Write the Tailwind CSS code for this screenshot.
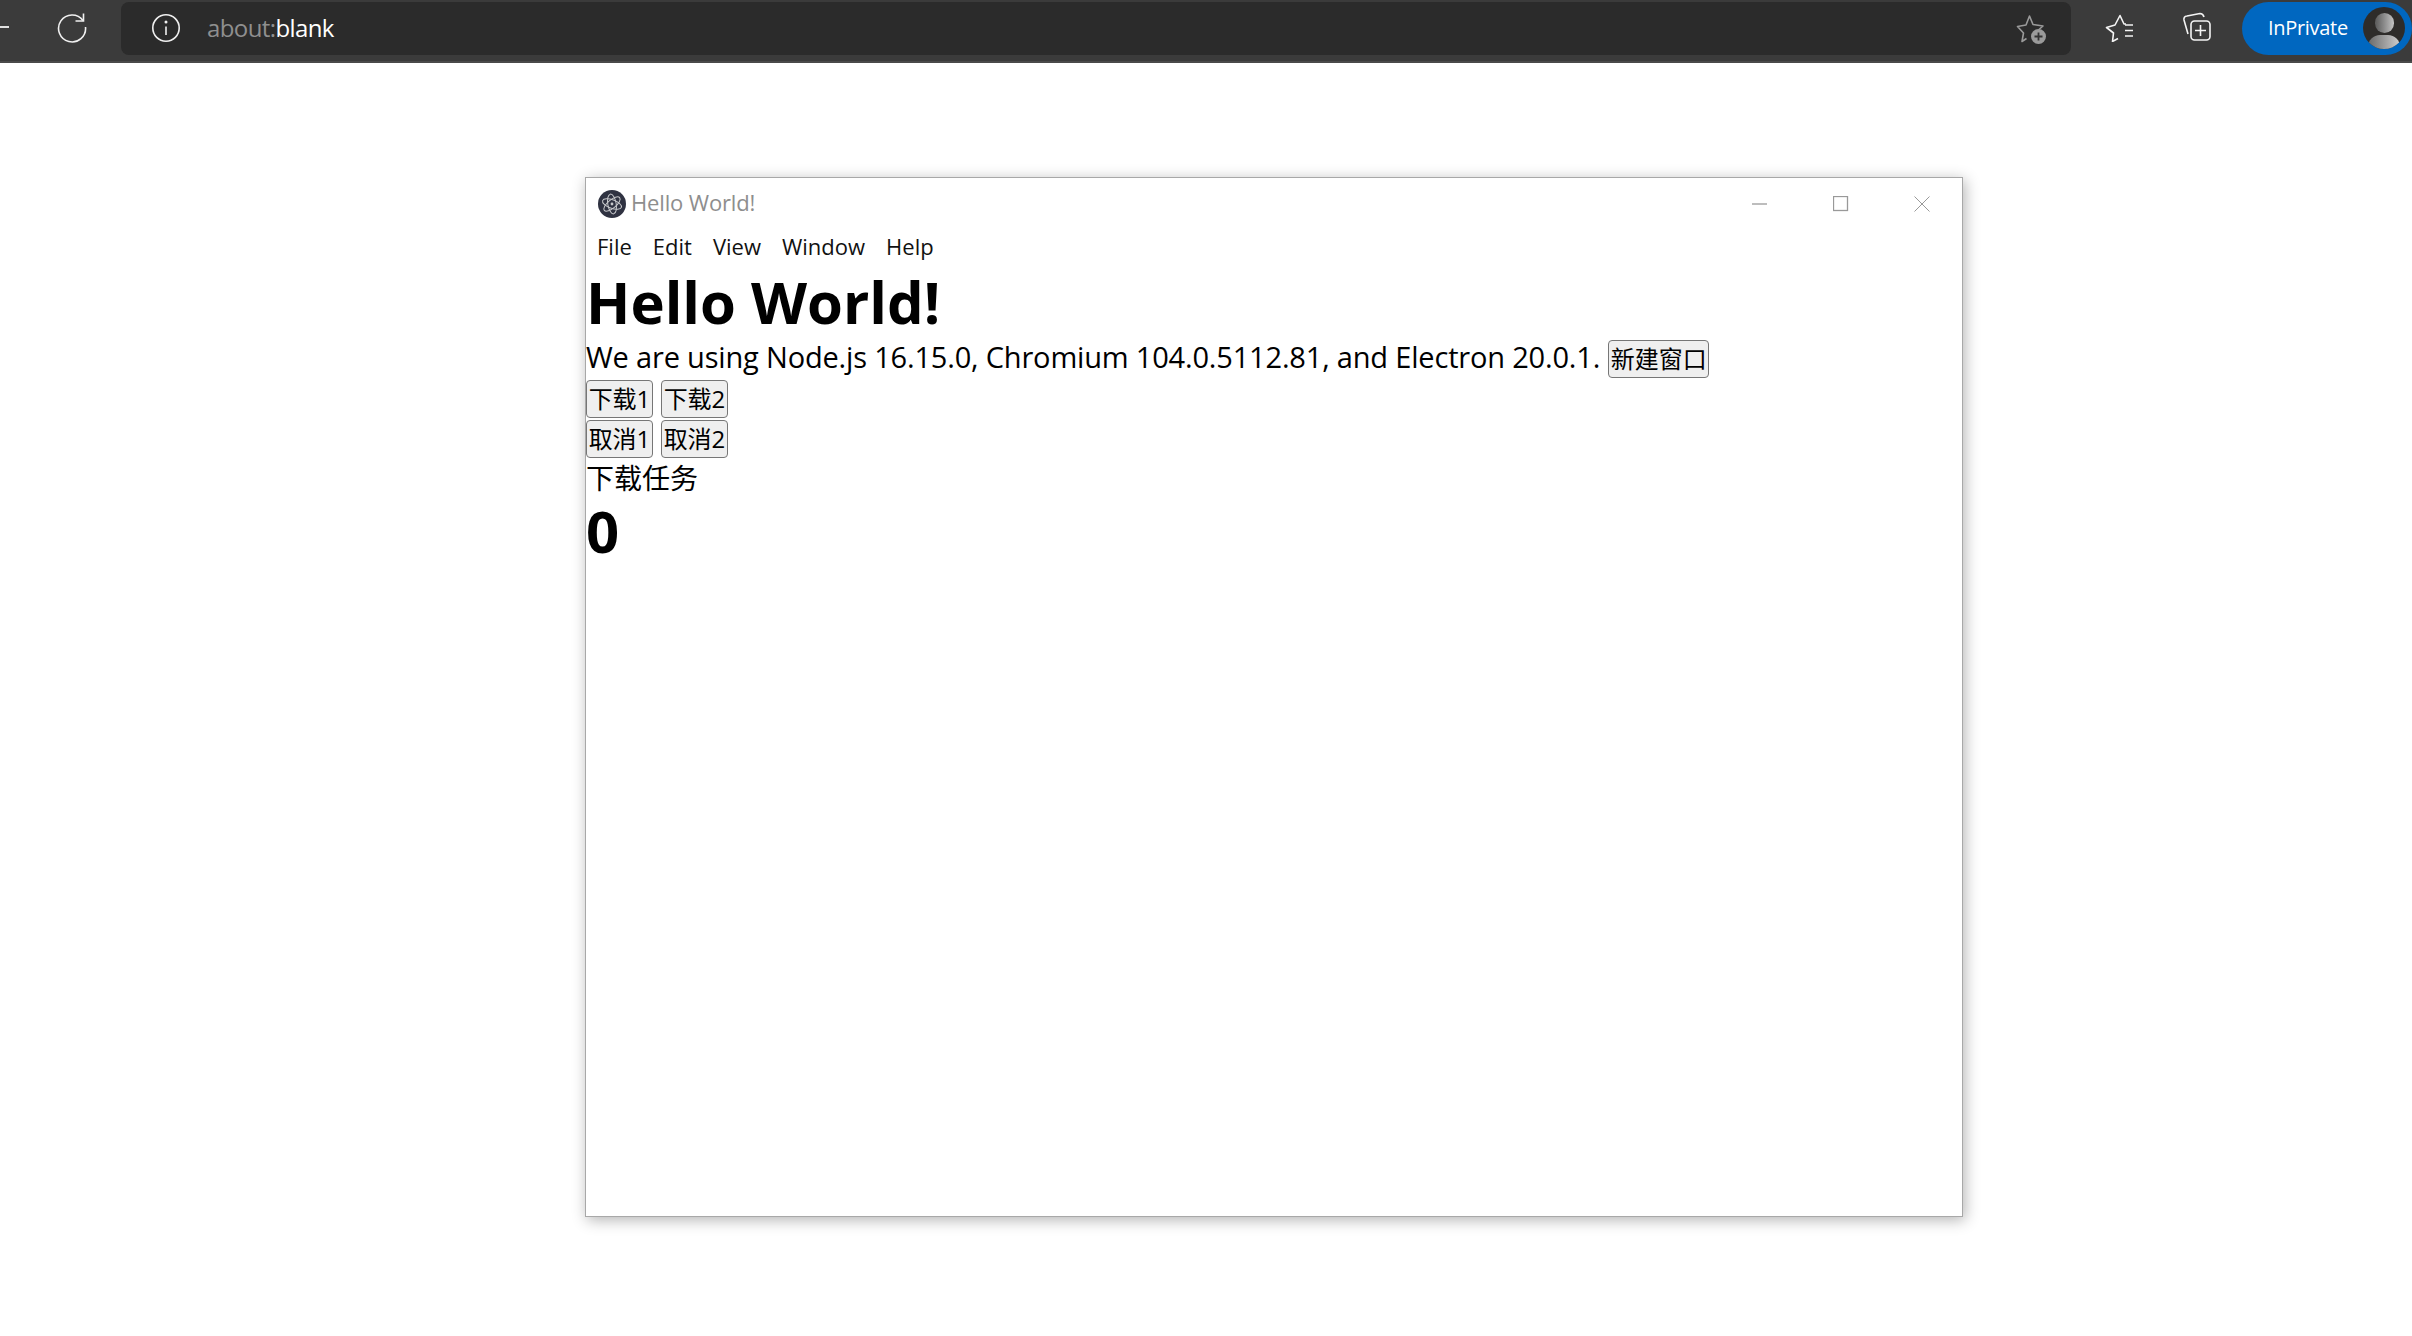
<!DOCTYPE html>
<html lang="en">
<head>
    <meta charset="UTF-8">
    <title>Hello World!</title>
    <script src="https://cdn.jsdelivr.net/npm/@tailwindcss/browser@4"></script>
</head>
<body class="bg-white h-[1336px] w-[2412px] overflow-hidden font-['Open_Sans','Noto_Sans_CJK_SC',sans-serif]">
    <!-- Browser toolbar -->
    <div class="h-[63px] bg-[#3b3b3b] border-b-2 border-[#4a4a4a] flex items-start relative">
        <div class="w-[121px] h-[53px] relative flex items-center shrink-0">
            <div class="w-[9px] h-[2px] bg-[#e0e0e0]"></div>
            <svg class="ml-[47px]" width="32" height="32" viewBox="0 0 32 32" fill="none" stroke="#f0f0f0" stroke-width="1.6">
                <path d="M27 9.5A13.5 13.5 0 1 0 29.5 16"/>
                <path d="M27.5 2.5V10H19.5"/>
            </svg>
        </div>
        <div class="w-[1950px] h-[53px] mt-[2px] bg-[#2b2b2b] rounded-lg flex items-center shrink-0">
            <svg class="ml-[30px] -mt-[1px]" width="30" height="30" viewBox="0 0 30 30" fill="none" stroke="#f0f0f0" stroke-width="1.6">
                <circle cx="15" cy="15" r="13.2"/>
                <path d="M15 13.5V22"/>
                <circle cx="15" cy="9" r="0.7" fill="#f0f0f0"/>
            </svg>
            <div class="ml-[26px] -mt-[2px] text-[24px] text-[#8f8f8f] tracking-[-0.6px]">about:<span class="text-white">blank</span></div>
            <svg class="ml-auto mr-[23px]" width="32" height="32" viewBox="0 0 32 32" fill="none" stroke="#9a9a9a" stroke-width="1.6" stroke-linejoin="round">
                <path d="M10.5 25.5L6 28.5L7.5 20L1.5 13.5L10 12L13.5 3L17 11.5L27 13L23 16.5"/>
                <circle cx="22.5" cy="23.5" r="7.5" fill="#9a9a9a" stroke="none"/>
                <path d="M22.5 19.5V27.5M18.5 23.5H26.5" stroke="#333" stroke-width="1.8"/>
            </svg>
        </div>
        <div class="w-[64px] h-[53px] flex items-center justify-center ml-[17px] shrink-0">
            <svg width="30" height="30" viewBox="0 0 30 30" fill="none" stroke="#f4f4f4" stroke-width="1.6" stroke-linejoin="round">
                <path d="M13 26.5L7.5 29.5L8.5 21L1.5 15.5L10 13L15 3.5L19 12H21"/>
                <path d="M20 13H28M20 18.5H28M20 24H28"/>
            </svg>
        </div>
        <div class="w-[60px] h-[53px] flex items-center justify-center ml-[15px] shrink-0">
            <svg width="30" height="30" viewBox="0 0 30 30" fill="none" stroke="#f4f4f4" stroke-width="1.6" stroke-linejoin="round">
                <path d="M6 22L2 8Q1.4 4.5 5 4L18 1.5Q21 1.5 22 5"/>
                <rect x="9" y="9" width="19" height="19" rx="3.5"/>
                <path d="M18.5 13V24M13 18.5H24"/>
            </svg>
        </div>
        <div class="w-[170px] h-[53px] mt-[2px] ml-[15px] bg-[#0067c0] rounded-full flex items-center shrink-0 relative">
            <span class="ml-[26px] -mt-[2px] text-[20px] text-white tracking-[-0.3px]">InPrivate</span>
            <div class="absolute left-[121px] top-[5px] w-[42px] h-[42px] rounded-full bg-[#2e2c2a] overflow-hidden">
                <div class="absolute left-[12px] top-[6px] w-[19px] h-[20px] rounded-full bg-gradient-to-r from-[#5a5a5a] to-[#c4c4c4]"></div>
                <div class="absolute left-[5px] top-[28px] w-[32px] h-[24px] rounded-full bg-gradient-to-r from-[#6a6a6a] to-[#cfcfcf]"></div>
            </div>
        </div>
    </div>

    <!-- Electron window -->
    <div class="ml-[585px] mt-[114px] w-[1378px] h-[1040px] bg-white border border-[#a8a8a8] shadow-[2px_3px_14px_rgba(0,0,0,0.3)] flex flex-col">
        <div class="h-[52px] flex items-center shrink-0">
            <svg class="ml-[12px]" width="28" height="28" viewBox="0 0 28 28" fill="none" stroke="#c8c9cc" stroke-width="1">
                <circle cx="14" cy="14" r="14" fill="#2f3241" stroke="none"/>
                <ellipse cx="14" cy="14" rx="10" ry="4.2" transform="rotate(20 14 14)"/>
                <ellipse cx="14" cy="14" rx="10" ry="4.2" transform="rotate(80 14 14)"/>
                <ellipse cx="14" cy="14" rx="10" ry="4.2" transform="rotate(140 14 14)"/>
                <circle cx="14" cy="14" r="1.4" fill="#c8c9cc" stroke="none"/>
            </svg>
            <span class="ml-[5px] -mt-[3px] text-[22px] text-[#8e8e8e] tracking-[-0.15px]">Hello World!</span>
            <div class="ml-auto flex items-center">
                <svg width="81" height="16" viewBox="0 0 81 16" stroke="#999" stroke-width="1.3" fill="none"><path d="M0 8H15"/></svg>
                <svg width="81" height="16" viewBox="0 0 81 16" stroke="#999" stroke-width="1.3" fill="none"><rect x="0.5" y="0.5" width="14" height="14"/></svg>
                <svg class="mr-[32px]" width="16" height="16" viewBox="0 0 16 16" stroke="#999" stroke-width="1" fill="none"><path d="M0.5 0.5L15.5 15.5M15.5 0.5L0.5 15.5"/></svg>
            </div>
        </div>
        <div class="h-[33px] flex items-center text-[22px] text-[#111] pl-[11px] gap-[21px] shrink-0">
            <span>File</span><span>Edit</span><span>View</span><span>Window</span><span>Help</span>
        </div>
        <div class="h-[74px] pt-[5px] text-[58px] leading-[68px] font-bold text-black shrink-0">Hello World!</div>
        <div class="h-[40px] flex items-center text-[29px] text-black tracking-[-0.18px] shrink-0">
            <span>We are using Node.js 16.15.0, Chromium 104.0.5112.81, and Electron 20.0.1.</span>
            <button class="ml-[8px] mt-[4px] w-[101px] h-[38px] bg-[#efefef] border border-[#767676] rounded-[4px] text-[24px] leading-none tracking-normal text-black">新建窗口</button>
        </div>
        <div class="flex gap-[8px] mt-[3px] shrink-0">
            <button class="w-[67px] h-[38px] bg-[#efefef] border border-[#767676] rounded-[4px] text-[24px] leading-none text-black">下载1</button>
            <button class="w-[67px] h-[38px] bg-[#efefef] border border-[#767676] rounded-[4px] text-[24px] leading-none text-black">下载2</button>
        </div>
        <div class="flex gap-[8px] mt-[2px] shrink-0">
            <button class="w-[67px] h-[38px] bg-[#efefef] border border-[#767676] rounded-[4px] text-[24px] leading-none text-black">取消1</button>
            <button class="w-[67px] h-[38px] bg-[#efefef] border border-[#767676] rounded-[4px] text-[24px] leading-none text-black">取消2</button>
        </div>
        <div class="h-[40px] flex items-center text-[28px] text-black shrink-0">下载任务</div>
        <div class="h-[68px] text-[58px] leading-[66px] font-bold text-black shrink-0">0</div>
    </div>
</body>
</html>
